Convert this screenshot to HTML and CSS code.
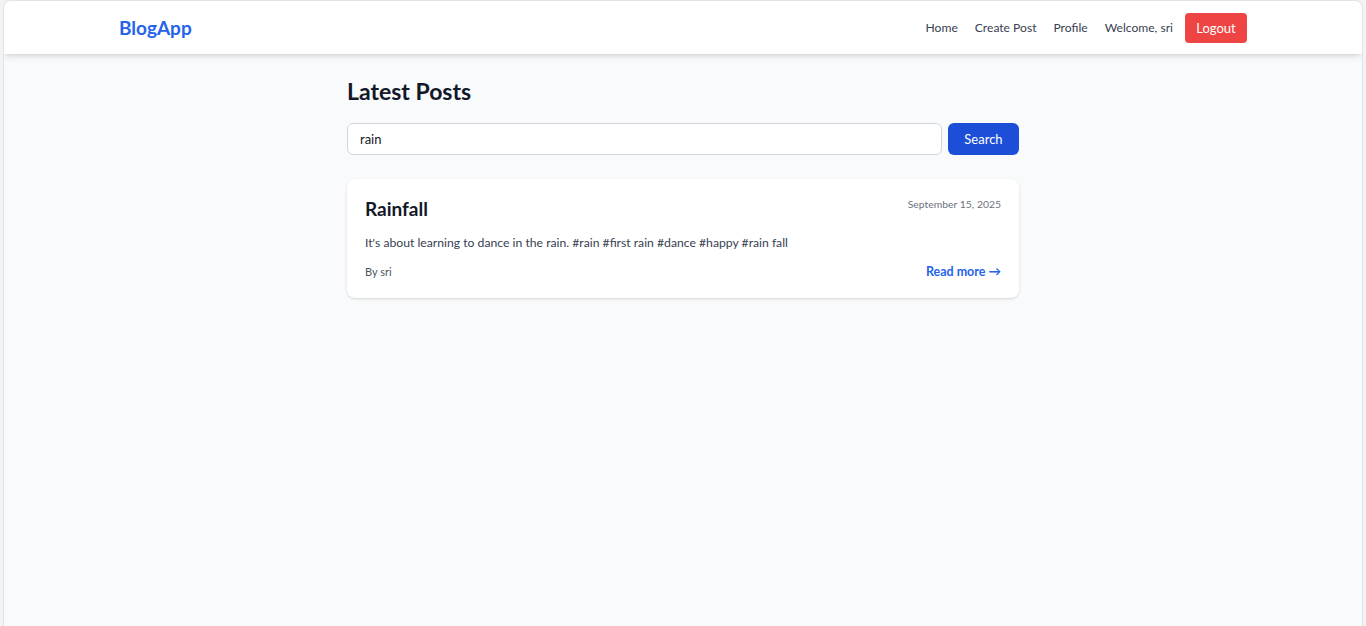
FILE: index.html
```html
<!DOCTYPE html>
<html lang="en">
<head>
<meta charset="utf-8">
<title>BlogApp</title>
<link rel="stylesheet" href="styles.css">
</head>
<body>
<div class="window">
  <header class="navbar">
    <div class="nav-inner">
      <a class="brand" href="#">BlogApp</a>
      <nav class="nav-links">
        <a href="#">Home</a>
        <a href="#">Create Post</a>
        <a href="#">Profile</a>
        <span class="welcome">Welcome, sri</span>
        <button class="logout">Logout</button>
      </nav>
    </div>
  </header>
  <main class="main">
    <h1 class="page-title">Latest Posts</h1>
    <form class="search">
      <input class="search-input" type="text" value="rain">
      <button class="search-btn" type="button">Search</button>
    </form>
    <article class="card">
      <div class="card-head">
        <h2 class="card-title">Rainfall</h2>
        <span class="card-date">September 15, 2025</span>
      </div>
      <p class="card-body">It's about learning to dance in the rain. #rain #first rain #dance #happy #rain fall</p>
      <div class="card-foot">
        <span class="author">By sri</span>
        <a class="read-more" href="#">Read more →</a>
      </div>
    </article>
  </main>
</div>
</body>
</html>
```

FILE: styles.css
```css
* { box-sizing: border-box; }
html, body { margin: 0; height: 100%; }
body {
  background: #f3f3f3;
  font-family: "Lato", "Noto Sans", sans-serif;
  padding: 0 3px;
}
.window {
  height: 100%;
  background: #f9fafb;
  border: 1px solid #e3e3e3;
  border-bottom: none;
  border-radius: 8px 8px 0 0;
  overflow: hidden;
}
.navbar {
  background: #fff;
  height: 53px;
  box-shadow: 0 4px 6px -1px rgba(0,0,0,0.1), 0 2px 4px -2px rgba(0,0,0,0.1);
  position: relative;
}
.nav-inner {
  max-width: 1160px;
  margin: 0 auto;
  padding: 0 16px;
  height: 100%;
  display: flex;
  align-items: center;
  justify-content: space-between;
}
.brand {
  color: #2563eb;
  font-weight: 700;
  font-size: 19px;
  text-decoration: none;
}
.nav-links {
  display: flex;
  align-items: center;
  gap: 17px;
  font-size: 12.1px;
}
.nav-links a, .welcome {
  color: #374151;
  text-decoration: none;
}
.logout {
  background: #ef4444;
  color: #fff;
  border: none;
  border-radius: 4px;
  font: inherit;
  font-size: 13px;
  height: 30px;
  width: 62px;
  padding: 0;
  margin-left: -5px;
}
.main {
  max-width: 672px;
  margin: 0 auto;
  padding-top: 21px;
}
.page-title {
  margin: 0 0 16px;
  font-size: 23px;
  font-weight: 700;
  color: #111827;
  line-height: 32px;
}
.search {
  display: flex;
  gap: 6px;
  margin-bottom: 24px;
}
.search-input {
  flex: 1;
  height: 32px;
  border: 1px solid #d1d5db;
  border-radius: 6px;
  padding: 0 12px;
  font: inherit;
  font-size: 13px;
  color: #111827;
  background: #fff;
}
.search-btn {
  width: 71px;
  height: 32px;
  border: none;
  border-radius: 6px;
  background: #1d4ed8;
  color: #fff;
  font: inherit;
  font-size: 13px;
}
.card {
  background: #fff;
  border-radius: 8px;
  box-shadow: 0 1px 3px rgba(0,0,0,0.12), 0 1px 2px -1px rgba(0,0,0,0.1);
  padding: 17px 18px 19px;
}
.card-head {
  display: flex;
  justify-content: space-between;
  align-items: flex-start;
}
.card-title {
  margin: 0;
  font-size: 19px;
  font-weight: 700;
  color: #111827;
  line-height: 26px;
}
.card-date {
  font-size: 10.4px;
  color: #6b7280;
  margin-top: 2px;
}
.card-body {
  margin: 12px 0 12px;
  font-size: 12.2px;
  color: #374151;
  line-height: 18px;
}
.card-foot {
  display: flex;
  justify-content: space-between;
  align-items: center;
}
.author {
  font-size: 11px;
  color: #4b5563;
}
.read-more {
  font-size: 12.5px;
  font-weight: 700;
  color: #2563eb;
  text-decoration: none;
}
```
